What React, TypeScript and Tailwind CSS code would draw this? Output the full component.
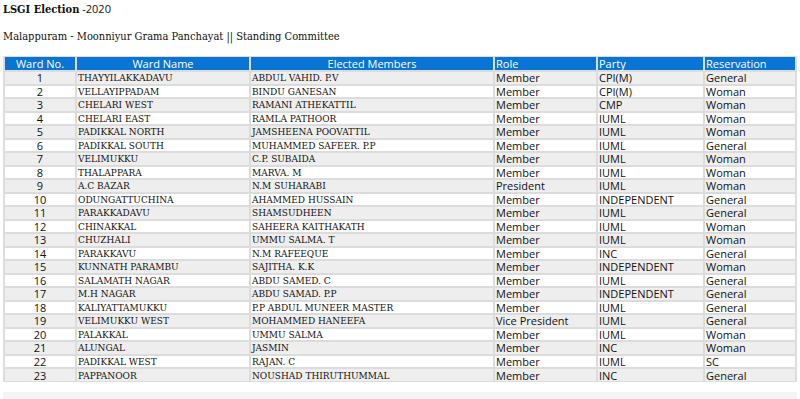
import React from "react";

type Row = {
  no: number;
  ward: string;
  member: string;
  role: string;
  party: string;
  reservation: string;
};

const rows: Row[] = [
  { no: 1, ward: "THAYYILAKKADAVU", member: "ABDUL VAHID. P.V", role: "Member", party: "CPI(M)", reservation: "General" },
  { no: 2, ward: "VELLAYIPPADAM", member: "BINDU GANESAN", role: "Member", party: "CPI(M)", reservation: "Woman" },
  { no: 3, ward: "CHELARI WEST", member: "RAMANI ATHEKATTIL", role: "Member", party: "CMP", reservation: "Woman" },
  { no: 4, ward: "CHELARI EAST", member: "RAMLA PATHOOR", role: "Member", party: "IUML", reservation: "Woman" },
  { no: 5, ward: "PADIKKAL NORTH", member: "JAMSHEENA POOVATTIL", role: "Member", party: "IUML", reservation: "Woman" },
  { no: 6, ward: "PADIKKAL SOUTH", member: "MUHAMMED SAFEER. P.P", role: "Member", party: "IUML", reservation: "General" },
  { no: 7, ward: "VELIMUKKU", member: "C.P. SUBAIDA", role: "Member", party: "IUML", reservation: "Woman" },
  { no: 8, ward: "THALAPPARA", member: "MARVA. M", role: "Member", party: "IUML", reservation: "Woman" },
  { no: 9, ward: "A.C BAZAR", member: "N.M SUHARABI", role: "President", party: "IUML", reservation: "Woman" },
  { no: 10, ward: "ODUNGATTUCHINA", member: "AHAMMED HUSSAIN", role: "Member", party: "INDEPENDENT", reservation: "General" },
  { no: 11, ward: "PARAKKADAVU", member: "SHAMSUDHEEN", role: "Member", party: "IUML", reservation: "General" },
  { no: 12, ward: "CHINAKKAL", member: "SAHEERA KAITHAKATH", role: "Member", party: "IUML", reservation: "Woman" },
  { no: 13, ward: "CHUZHALI", member: "UMMU SALMA. T", role: "Member", party: "IUML", reservation: "Woman" },
  { no: 14, ward: "PARAKKAVU", member: "N.M RAFEEQUE", role: "Member", party: "INC", reservation: "General" },
  { no: 15, ward: "KUNNATH PARAMBU", member: "SAJITHA. K.K", role: "Member", party: "INDEPENDENT", reservation: "Woman" },
  { no: 16, ward: "SALAMATH NAGAR", member: "ABDU SAMED. C", role: "Member", party: "IUML", reservation: "General" },
  { no: 17, ward: "M.H NAGAR", member: "ABDU SAMAD. P.P", role: "Member", party: "INDEPENDENT", reservation: "General" },
  { no: 18, ward: "KALIYATTAMUKKU", member: "P.P ABDUL MUNEER MASTER", role: "Member", party: "IUML", reservation: "General" },
  { no: 19, ward: "VELIMUKKU WEST", member: "MOHAMMED HANEEFA", role: "Vice President", party: "IUML", reservation: "General" },
  { no: 20, ward: "PALAKKAL", member: "UMMU SALMA", role: "Member", party: "IUML", reservation: "Woman" },
  { no: 21, ward: "ALUNGAL", member: "JASMIN", role: "Member", party: "INC", reservation: "Woman" },
  { no: 22, ward: "PADIKKAL WEST", member: "RAJAN. C", role: "Member", party: "IUML", reservation: "SC" },
  { no: 23, ward: "PAPPANOOR", member: "NOUSHAD THIRUTHUMMAL", role: "Member", party: "INC", reservation: "General" },
];

// condensed serif, the page's default-looking face
const serif = "font-['DejaVu_Serif_Condensed','DejaVu_Serif',serif] font-stretch-condensed";
const sans = "font-['Open_Sans',sans-serif]";

export default function App() {
  return (
    <div className="w-[800px] h-[399px] overflow-hidden bg-white text-[#111]">
      <div className="px-[3px] pt-[2px]">
        <div className="h-[14px] leading-[14px] text-[11px]">
          <span className={`${serif} font-bold text-[11px]`}>LSGI Election</span>
          <span className={`${sans} text-[11px]`}> -2020</span>
        </div>
        <div className={`${serif} mt-[14px] text-[11px] leading-[14px]`}>
          Malappuram - Moonniyur Grama Panchayat || Standing Committee
        </div>

        <table className="mt-[12px] w-[792px] table-fixed border-collapse border border-[#dcdcdc]">
          <colgroup>
            <col className="w-[72px]" />
            <col className="w-[174px]" />
            <col className="w-[244px]" />
            <col className="w-[103px]" />
            <col className="w-[107px]" />
            <col className="w-[92px]" />
          </colgroup>
          <thead>
            <tr className={`h-[14px] bg-[#0875d4] text-white ${sans} text-[11px] leading-[13px]`}>
              <th className="font-normal border-x-2 border-[#dcdcdc] text-center p-0">Ward No.</th>
              <th className="font-normal border-x-2 border-[#dcdcdc] text-center p-0">Ward Name</th>
              <th className="font-normal border-x-2 border-[#dcdcdc] text-center p-0">Elected Members</th>
              <th className="font-normal border-x-2 border-[#dcdcdc] text-left pl-[1px] p-0">Role</th>
              <th className="font-normal border-x-2 border-[#dcdcdc] text-left pl-[1px] p-0">Party</th>
              <th className="font-normal border-x-2 border-[#dcdcdc] text-left pl-[1px] p-0">Reservation</th>
            </tr>
          </thead>
          <tbody>
            {rows.map((r, i) => (
              <tr
                key={r.no}
                className={`h-[13.5px] ${i % 2 === 0 ? "bg-[#eeeeee]" : "bg-white"} text-[11px] leading-[11px] border-t-2 border-[#dcdcdc]`}
              >
                <td className={`${sans} border-x-2 border-[#dcdcdc] text-center p-0`}>{r.no}</td>
                <td className={`${serif} text-[10px] border-x-2 border-[#dcdcdc] pl-[1px] p-0 whitespace-nowrap`}>{r.ward}</td>
                <td className={`${serif} text-[10px] border-x-2 border-[#dcdcdc] pl-[1px] p-0 whitespace-nowrap`}>{r.member}</td>
                <td className={`${sans} border-x-2 border-[#dcdcdc] pl-[1px] p-0`}>{r.role}</td>
                <td className={`${sans} border-x-2 border-[#dcdcdc] pl-[1px] p-0`}>{r.party}</td>
                <td className={`${sans} border-x-2 border-[#dcdcdc] pl-[1px] p-0`}>{r.reservation}</td>
              </tr>
            ))}
          </tbody>
        </table>
      </div>
      <div className="mt-[10px] mx-[3px] h-[20px] bg-[#f4f4f4]" />
    </div>
  );
}
